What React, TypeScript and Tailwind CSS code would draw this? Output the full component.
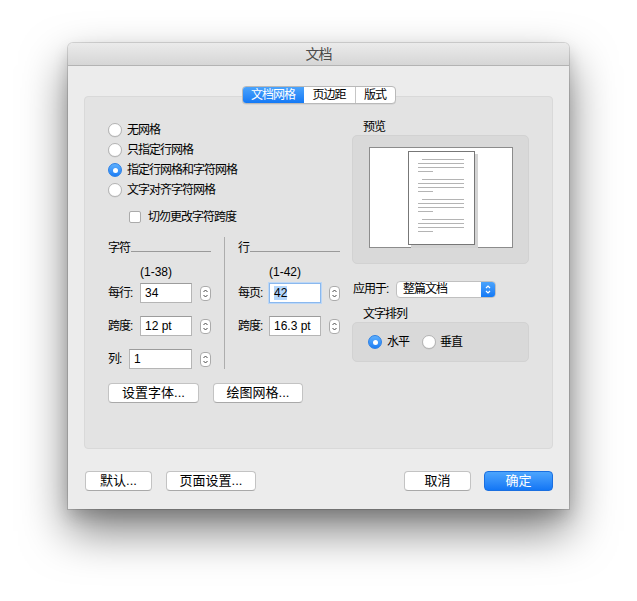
import React from "react"

const FONT = { fontFamily: '"Liberation Sans", "Noto Sans CJK SC", sans-serif' }

function Cjk({ children, className = "" }: { children: React.ReactNode; className?: string }) {
  return <span className={"tracking-[-1px] " + className}>{children}</span>
}

function Radio({ checked }: { checked?: boolean }) {
  if (checked) {
    return (
      <div className="flex items-center justify-center w-[14px] h-[14px] rounded-full bg-gradient-to-b from-[#5eb0fd] to-[#1b7ef5] border border-[#2b80e6] shrink-0">
        <div className="w-[5px] h-[5px] rounded-full bg-white" />
      </div>
    )
  }
  return <div className="w-[14px] h-[14px] rounded-full bg-white border border-[#b4b4b4] shadow-[0_0.5px_0.5px_rgba(0,0,0,0.1)] shrink-0" />
}

function Stepper() {
  return (
    <svg width="11" height="15" viewBox="0 0 11 15" className="shrink-0">
      <rect x="0.5" y="0.5" width="10" height="14" rx="3.5" fill="#fff" stroke="#ababab" />
      <path d="M3.5 6 L5.5 4 L7.5 6" fill="none" stroke="#4a4a4a" strokeWidth="1" />
      <path d="M3.5 9 L5.5 11 L7.5 9" fill="none" stroke="#4a4a4a" strokeWidth="1" />
    </svg>
  )
}

function Input({ value, w = "w-[52px]", focused }: { value: string; w?: string; focused?: boolean }) {
  return (
    <div
      className={
        w +
        " h-[20px] bg-white flex items-center pl-[4px] text-[12px] text-black " +
        (focused
          ? "border border-[#8ab8ee] shadow-[0_0_0_1px_#bcd7f6]"
          : "border border-[#b5b5b5] border-t-[#9c9c9c]")
      }
    >
      {focused ? <span className="bg-[#b3d6fc] leading-[14px]">{value}</span> : value}
    </div>
  )
}

function Button({ children, w }: { children: React.ReactNode; w: string }) {
  return (
    <div className={w + " h-[20px] rounded-[4px] bg-white border border-[#c3c3c3] border-b-[#a9a9a9] flex items-center justify-center text-[13px] text-black"}>
      {children}
    </div>
  )
}

function Field({ label, labelW, value, inputW, focused }: { label: string; labelW: string; value: string; inputW?: string; focused?: boolean }) {
  return (
    <div className="flex items-center h-[20px]">
      <div className={labelW + " text-[12px]"}>
        <Cjk>{label}</Cjk>
      </div>
      <Input value={value} w={inputW} focused={focused} />
      <div className="ml-[8px]">
        <Stepper />
      </div>
    </div>
  )
}

function PageLines() {
  const groups = [0, 20, 40, 60]
  return (
    <svg width="67" height="94" viewBox="0 0 67 94">
      <rect x="0.5" y="0.5" width="66" height="93" fill="#fff" stroke="#777" />
      {groups.map(g => (
        <g key={g} stroke="#b4b4b4" strokeWidth="1">
          <line x1="14" x2="56" y1={8.5 + g} y2={8.5 + g} />
          <line x1="10" x2="56" y1={12.5 + g} y2={12.5 + g} />
          <line x1="10" x2="56" y1={16.5 + g} y2={16.5 + g} />
          <line x1="10" x2="25" y1={20.5 + g} y2={20.5 + g} />
        </g>
      ))}
    </svg>
  )
}

export default function App() {
  return (
    <div className="w-[637px] h-[601px] bg-white pt-[43px] pl-[68px] overflow-hidden text-black" style={FONT}>
      <div className="w-[501px] h-[466px] bg-[#ececec] rounded-t-[5px] flex flex-col shadow-[0_22px_46px_rgba(0,0,0,0.5),0_8px_16px_rgba(0,0,0,0.15),0_0_0_1px_rgba(0,0,0,0.13)]">
        {/* title bar */}
        <div className="h-[23px] rounded-t-[5px] bg-gradient-to-b from-[#ebebeb] to-[#d6d6d6] border-b border-[#b3b3b3] flex items-center justify-center text-[14px] text-[#4a4a4a]">
          <Cjk>文档</Cjk>
        </div>

        {/* tabs */}
        <div className="mt-[20px] h-[18px] flex justify-center relative z-10">
          <div className="flex h-[18px] rounded-[4px] border border-[#b9b9b9] bg-white overflow-hidden text-[12px] shadow-[0_0.5px_0.5px_rgba(0,0,0,0.1)]">
            <div className="w-[61px] flex items-center justify-center bg-gradient-to-b from-[#4aa3fc] to-[#1279f5] text-white">
              <Cjk>文档网格</Cjk>
            </div>
            <div className="w-[52px] flex items-center justify-center border-r border-[#c6c6c6]">
              <Cjk>页边距</Cjk>
            </div>
            <div className="w-[39px] flex items-center justify-center">
              <Cjk>版式</Cjk>
            </div>
          </div>
        </div>

        {/* panel */}
        <div className="mx-[16px] -mt-[8px] h-[353px] rounded-[4px] bg-[#e3e3e3] border border-[#d9d9d9] flex pl-[23px] pt-[23px] text-[12px]">
          {/* left column */}
          <div className="w-[232px] flex flex-col">
            {["无网格", "只指定行网格", "指定行网格和字符网格", "文字对齐字符网格"].map((t, i) => (
              <div key={t} className="h-[20px] flex items-center gap-[5px]">
                <Radio checked={i === 2} />
                <Cjk>{t}</Cjk>
              </div>
            ))}
            <div className="mt-[7px] h-[20px] pl-[21px] flex items-center gap-[7px]">
              <div className="w-[12px] h-[12px] bg-white border border-[#ababab] rounded-[2px]" />
              <Cjk>切勿更改字符跨度</Cjk>
            </div>

            <div className="mt-[10px] flex">
              {/* 字符 */}
              <div className="w-[103px] flex flex-col">
                <div className="h-[21px] flex items-center">
                  <Cjk>字符</Cjk>
                  <div className="flex-1 h-px bg-[#9a9a9a] mt-[8px] ml-[1px]" />
                </div>
                <div className="mt-[4px] h-[20px] pl-[32px] flex items-center">(1-38)</div>
                <div className="mt-[1px]">
                  <Field label="每行:" labelW="w-[32px]" value="34" />
                </div>
                <div className="mt-[13px]">
                  <Field label="跨度:" labelW="w-[32px]" value="12 pt" />
                </div>
                <div className="mt-[13px]">
                  <Field label="列:" labelW="w-[21px]" value="1" inputW="w-[63px]" />
                </div>
              </div>
              <div className="ml-[13px] w-px h-[132px] bg-[#adadad]" />
              {/* 行 */}
              <div className="ml-[13px] w-[102px] flex flex-col">
                <div className="h-[21px] flex items-center">
                  <Cjk>行</Cjk>
                  <div className="flex-1 h-px bg-[#9a9a9a] mt-[8px] ml-[1px]" />
                </div>
                <div className="mt-[4px] h-[20px] pl-[31px] flex items-center">(1-42)</div>
                <div className="mt-[1px]">
                  <Field label="每页:" labelW="w-[31px]" value="42" focused />
                </div>
                <div className="mt-[13px]">
                  <Field label="跨度:" labelW="w-[31px]" value="16.3 pt" />
                </div>
              </div>
            </div>

            <div className="mt-[14px] flex gap-[14px]">
              <Button w="w-[91px]">设置字体...</Button>
              <Button w="w-[90px]">绘图网格...</Button>
            </div>
          </div>

          {/* right column */}
          <div className="ml-[12px] w-[177px] flex flex-col">
            <div className="h-[16px] pl-[11px] flex items-center -mt-[1px]">
              <Cjk>预览</Cjk>
            </div>
            <div className="h-[129px] rounded-[5px] bg-[#d9d9d9] border border-[#d2d2d2] pl-[16px] pt-[11px]">
              <div className="w-[144px] h-[101px] bg-white border border-[#8c8c8c] pl-[38px] pt-[3px]">
                <div className="w-[67px] h-[94px] shadow-[3px_3px_0_#d3d3d3]">
                  <PageLines />
                </div>
              </div>
            </div>

            <div className="mt-[17px] h-[16px] flex items-center">
              <div className="w-[44px] pl-[1px]"><Cjk>应用于:</Cjk></div>
              <div className="w-[100px] h-[17px] rounded-[4px] bg-white border border-[#c0c0c0] flex items-center overflow-hidden">
                <div className="flex-1 pl-[6px]"><Cjk>整篇文档</Cjk></div>
                <div className="w-[14px] h-full bg-gradient-to-b from-[#4aa3fc] to-[#1279f5] flex items-center justify-center">
                  <svg width="8" height="11" viewBox="0 0 8 11">
                    <path d="M2 4 L4 2 L6 4" fill="none" stroke="#fff" strokeWidth="1.2" />
                    <path d="M2 7 L4 9 L6 7" fill="none" stroke="#fff" strokeWidth="1.2" />
                  </svg>
                </div>
              </div>
            </div>

            <div className="mt-[9px] h-[16px] pl-[11px] flex items-center">
              <Cjk>文字排列</Cjk>
            </div>
            <div className="h-[40px] rounded-[5px] bg-[#d9d9d9] border border-[#d2d2d2] flex items-center pl-[15px]">
              <div className="flex items-center gap-[5px]">
                <Radio checked />
                <Cjk>水平</Cjk>
              </div>
              <div className="flex items-center gap-[4px] ml-[13px]">
                <Radio />
                <Cjk>垂直</Cjk>
              </div>
            </div>
          </div>
        </div>

        {/* bottom buttons */}
        <div className="mt-[22px] px-[16px] flex items-center">
          <div className="ml-[1px]">
            <Button w="w-[67px]">默认...</Button>
          </div>
          <div className="ml-[14px]">
            <Button w="w-[90px]">页面设置...</Button>
          </div>
          <div className="flex-1" />
          <Button w="w-[67px]">取消</Button>
          <div className="ml-[13px] w-[69px] h-[20px] rounded-[4px] bg-gradient-to-b from-[#4ca5fd] to-[#1276f5] border border-[#1a6fe0] flex items-center justify-center text-[13px] text-white">
            确定
          </div>
        </div>
      </div>
    </div>
  )
}
